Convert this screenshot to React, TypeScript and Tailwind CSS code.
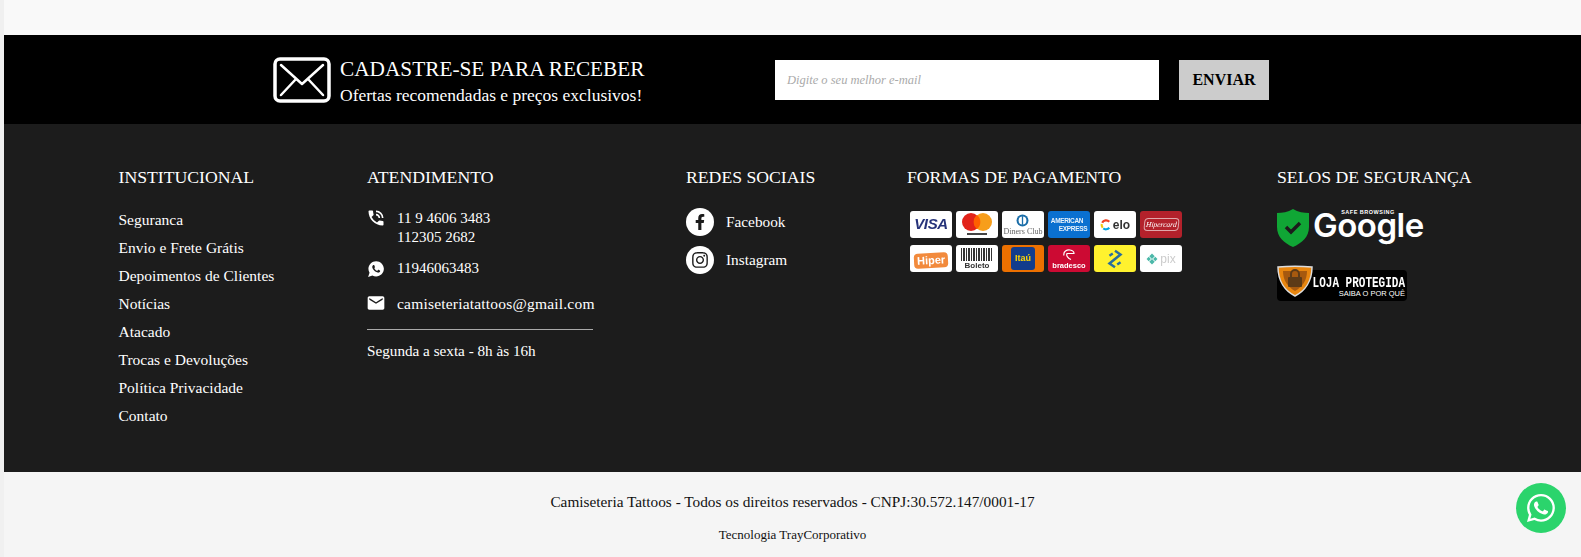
import { FaFacebookF, FaInstagram } from "react-icons/fa";
import { MdPhoneInTalk, MdEmail } from "react-icons/md";
import { IoLogoWhatsapp } from "react-icons/io";
import { BsWhatsapp } from "react-icons/bs";

const links = [
  "Seguranca",
  "Envio e Frete Grátis",
  "Depoimentos de Clientes",
  "Notícias",
  "Atacado",
  "Trocas e Devoluções",
  "Política Privacidade",
  "Contato",
];

function Heading({ children }: { children: string }) {
  return <h3 className="text-[17.700px] leading-6 text-white whitespace-nowrap">{children}</h3>;
}

function Envelope() {
  return (
    <svg width="58" height="46" viewBox="0 0 58 46" fill="none" stroke="white" strokeLinecap="round" strokeLinejoin="round">
      <rect x="2" y="2" width="54" height="42" rx="5" strokeWidth="3.500" />
      <path d="M8 8 L29 27 L50 8 M8 38 L23 22 M50 38 L35 22" strokeWidth="2.500" />
    </svg>
  );
}

function Card({ bg, children }: { bg: string; children: React.ReactNode }) {
  return (
    <div className={`w-[42px] h-[27px] rounded-[3px] overflow-hidden flex items-center justify-center blur-[0.3px] ${bg}`}>
      {children}
    </div>
  );
}

function PaymentCards() {
  return (
    <div className="grid grid-cols-[repeat(6,42px)] gap-x-1 gap-y-[7px] mt-[22px] ml-[3px] font-['Liberation_Sans',sans-serif]">
      <Card bg="bg-white">
        <span className="text-[15px] font-bold italic text-[#26337a] tracking-tight">VISA</span>
      </Card>
      <Card bg="bg-white">
        <svg width="36" height="25" viewBox="0 0 36 25">
          <circle cx="12" cy="10" r="9" fill="#e2231a" />
          <circle cx="24" cy="10" r="9" fill="#f79e1b" />
          <path d="M18 3a9 9 0 0 1 0 14a9 9 0 0 1 0-14z" fill="#ff5f00" />
          <rect x="8" y="21" width="20" height="2" fill="#444" />
        </svg>
      </Card>
      <Card bg="bg-white">
        <div className="flex flex-col items-center">
          <svg width="13" height="13" viewBox="0 0 12 12">
            <circle cx="6" cy="6" r="5.500" fill="#1a6da8" />
            <circle cx="6" cy="6" r="3.600" fill="white" />
            <rect x="5.400" y="2" width="1.200" height="8" fill="#1a6da8" />
          </svg>
          <span className="font-['Liberation_Serif',serif] text-[8px] leading-[9px] text-[#666]">Diners Club</span>
        </div>
      </Card>
      <Card bg="bg-[#0a70d0]">
        <div className="flex flex-col text-[6.500px] leading-[8px] font-bold text-white/90 tracking-tighter">
          <span>AMERICAN</span>
          <span className="ml-2">EXPRESS</span>
        </div>
      </Card>
      <Card bg="bg-white">
        <svg width="12" height="12" viewBox="0 0 11 11" fill="none" strokeWidth="2">
          <path d="M8.500 2.500A4 4 0 0 0 2 3.500" stroke="#ef4123" />
          <path d="M1.600 4.500A4 4 0 0 0 2.500 8" stroke="#f2c80f" />
          <path d="M3 8.600A4 4 0 0 0 8.500 8" stroke="#00a4e0" />
        </svg>
        <span className="text-[12px] font-bold text-[#333] ml-px">elo</span>
      </Card>
      <Card bg="bg-[#b3212b]">
        <span className="border border-white/60 -skew-x-6 rounded-sm px-px font-['Liberation_Serif',serif] italic text-[7.500px] leading-[11px] text-white">Hipercard</span>
      </Card>

      <Card bg="bg-white">
        <span className="bg-[#f28a3c] rounded-sm -rotate-3 px-[3px] text-[11px] leading-[15px] mt-1 font-bold text-white">Hiper</span>
      </Card>
      <Card bg="bg-white">
        <div className="flex flex-col items-center">
          <div className="w-[32px] h-[13px] bg-[repeating-linear-gradient(90deg,#333_0,#333_1px,#fff_1px,#fff_2px,#333_2px,#333_4px,#fff_4px,#fff_5px)]" />
          <span className="text-[8px] leading-[9px] font-bold text-[#333]">Boleto</span>
        </div>
      </Card>
      <Card bg="bg-[#ec7000]">
        <div className="w-[24px] h-[23px] rounded-[3px] bg-[#123c8c] flex items-center justify-center">
          <span className="text-[9px] font-bold text-[#ffd500]">Itaú</span>
        </div>
      </Card>
      <Card bg="bg-[#cc0a33]">
        <div className="flex flex-col items-center">
          <svg width="14" height="13" viewBox="0 0 14 12" fill="none" stroke="white" strokeWidth="1.200">
            <path d="M2 7C1 3 5 1 8 1.500C11 2 12 4 12 5H5C4 7 6 10 9 11" />
          </svg>
          <span className="text-[7.500px] leading-[9px] font-bold text-white">bradesco</span>
        </div>
      </Card>
      <Card bg="bg-[#fff22e]">
        <svg width="20" height="20" viewBox="0 0 18 18" fill="none" stroke="#2a6e9c" strokeWidth="2.200">
          <path d="M9 1.500L14 5 7 10.500M9 16.500L4 13l7-5.500M4 6l3-2M14 12l-3 2" />
        </svg>
      </Card>
      <Card bg="bg-white">
        <svg width="12" height="12" viewBox="0 0 11 11" fill="#4bb8a9">
          <path d="M5.500 0.500L8 3 5.500 5.500 3 3zM5.500 5.500L8 8 5.500 10.500 3 8zM2.500 3.500L4.500 5.500 2.500 7.500 0.500 5.500zM8.500 3.500L10.500 5.500 8.500 7.500 6.500 5.500z" />
        </svg>
        <span className="text-[12px] text-[#ccc] ml-0.5">pix</span>
      </Card>
    </div>
  );
}

function GoogleSeal() {
  return (
    <div className="flex items-start -ml-px h-[40px] font-['Liberation_Sans',sans-serif]">
      <svg width="34" height="38" viewBox="0 0 34 38" className="mt-[2px]">
        <path d="M17 0C22 3 28 4 33 4V18C33 28 26 34 17 38C8 34 1 28 1 18V4C6 4 12 3 17 0Z" fill="#10a635" />
        <path d="M10 18l5 5 9-9" fill="none" stroke="#1c1c1c" strokeWidth="3.500" />
      </svg>
      <div className="relative ml-[3px] -mt-[2px]">
        <span className="block text-[33px] leading-[40px] font-semibold text-white tracking-[-0.5px] font-['Inter',sans-serif]">Google</span>
        <span className="absolute right-[29px] top-[4px] text-[5.500px] leading-[6px] font-bold tracking-[0.5px] text-white">SAFE BROWSING</span>
      </div>
    </div>
  );
}

function LojaSeal() {
  return (
    <div className="relative mt-[23px] w-[130px] h-[31px] rounded-[4px] bg-black">
      <svg width="36" height="34" viewBox="0 0 36 34" className="absolute left-0 -top-[7px]">
        <path d="M1 4C12 3 24 3 35 4C35 18 28 28 18 33C8 28 1 18 1 4Z" fill="#e8860f" stroke="#ddd" strokeWidth="1.500" />
        <path d="M6 8H30C30 18 25 24 18 28C11 24 6 18 6 8Z" fill="#a6590f" />
        <rect x="11" y="14" width="14" height="10" rx="1" fill="#5c3a17" />
        <path d="M14 14V11a4 4 0 0 1 8 0v3" fill="none" stroke="#5c3a17" strokeWidth="2" />
      </svg>
      <div className="flex flex-col items-end pr-[2px] pt-[6px]">
        <span className="text-[11px] leading-[14px] font-bold text-white scale-y-125 font-['Liberation_Mono',monospace]">LOJA PROTEGIDA</span>
        <span className="text-[7.500px] leading-[8px] text-white font-['Liberation_Sans',sans-serif]">SAIBA O POR QUÊ</span>
      </div>
    </div>
  );
}

export default function App() {
  return (
    <div className="relative h-[557px] overflow-hidden bg-[#f9f9f9] pt-[35px] pl-1 font-['Liberation_Serif',serif]">
      <div className="absolute left-0 top-0 bottom-0 w-1 bg-[#f0f0f0]" />

      {/* newsletter */}
      <section className="h-[89px] bg-black flex items-center pl-[269px]">
        <Envelope />
        <div className="ml-[9px] w-[435px] mt-[2px]">
          <p className="text-[21.300px] leading-7 text-white">CADASTRE-SE PARA RECEBER</p>
          <p className="mt-[2px] text-[17.500px] leading-[21px] text-white">Ofertas recomendadas e preços exclusivos!</p>
        </div>
        <div className="w-[384px] h-10 bg-white flex items-center pl-3 pt-px text-[12.500px] italic text-[#aaa]">
          Digite o seu melhor e-mail
        </div>
        <button className="ml-5 w-[90px] h-10 bg-[#ccc] text-[16px] font-bold text-black">ENVIAR</button>
      </section>

      {/* footer columns */}
      <section className="h-[348px] bg-[#1c1c1c] flex pt-[41px] pl-[114.500px] text-white">
        <div className="w-[248.500px]">
          <Heading>INSTITUCIONAL</Heading>
          <ul className="mt-[20px] flex flex-col gap-[7px] text-[15.500px] leading-[21px]">
            {links.map((l) => (
              <li key={l}>{l}</li>
            ))}
          </ul>
        </div>

        <div className="w-[319px]">
          <Heading>ATENDIMENTO</Heading>
          <div className="mt-[20px] w-[226px] text-[15.500px] leading-[19px]">
            <div className="flex">
              <MdPhoneInTalk className="w-5 h-5 shrink-0 -ml-px mr-[11px] -mt-px" />
              <div className="text-[15px]">
                <p>11 9 4606 3483</p>
                <p>112305 2682</p>
              </div>
            </div>
            <div className="flex items-center mt-[12px]">
              <IoLogoWhatsapp className="w-[18px] h-[18px] shrink-0 mr-3" />
              <p className="text-[15px]">11946063483</p>
            </div>
            <div className="flex items-center mt-[15px] pb-[16px] border-b border-[#aaa]">
              <MdEmail className="w-5 h-5 shrink-0 -ml-px mr-[11px]" />
              <p className="whitespace-nowrap tracking-[0.2px]">camiseteriatattoos@gmail.com</p>
            </div>
            <p className="mt-[11px] text-[15.200px]">Segunda a sexta - 8h às 16h</p>
          </div>
        </div>

        <div className="w-[221px]">
          <Heading>REDES SOCIAIS</Heading>
          <div className="mt-[19px] flex flex-col gap-[10px] text-[15.300px]">
            <div className="flex items-center gap-3">
              <span className="w-7 h-7 rounded-full bg-white flex items-center justify-center text-[#1c1c1c]">
                <FaFacebookF className="w-4 h-4" />
              </span>
              Facebook
            </div>
            <div className="flex items-center gap-3">
              <span className="w-7 h-7 rounded-full bg-white flex items-center justify-center text-[#1c1c1c]">
                <FaInstagram className="w-[18px] h-[18px]" />
              </span>
              Instagram
            </div>
          </div>
        </div>

        <div className="w-[370px]">
          <Heading>FORMAS DE PAGAMENTO</Heading>
          <PaymentCards />
        </div>

        <div>
          <Heading>SELOS DE SEGURANÇA</Heading>
          <div className="mt-[18px]">
            <GoogleSeal />
            <LojaSeal />
          </div>
        </div>
      </section>

      {/* copyright */}
      <section className="flex flex-col items-center bg-[#f5f5f5] text-[#111] h-[85px]">
        <p className="mt-5 text-[15.300px] leading-5">Camiseteria Tattoos - Todos os direitos reservados - CNPJ:30.572.147/0001-17</p>
        <p className="mt-[15px] text-[13px] leading-4">Tecnologia TrayCorporativo</p>
      </section>

      <div className="absolute left-[1516px] top-[483px] w-[50px] h-[50px] rounded-full bg-[#2bd46c] flex items-center justify-center">
        <BsWhatsapp className="w-7 h-7 text-white" />
      </div>
    </div>
  );
}
